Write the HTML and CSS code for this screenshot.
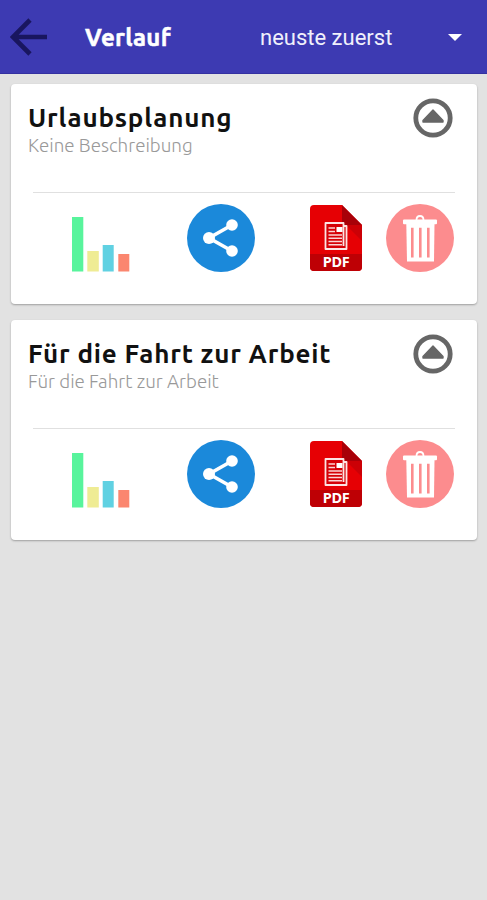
FILE: index.html
```html
<!DOCTYPE html>
<html lang="de">
<head>
  <meta charset="UTF-8">
  <meta name="viewport" content="width=device-width, initial-scale=1.0">
  <title>Verlauf</title>
  <link rel="stylesheet" href="styles.css">
</head>
<body>

<!-- Icons, die in jeder Karte vorkommen -->
<svg class="icon-defs" aria-hidden="true">
  <symbol id="icon-toggle" viewBox="0 0 40 40">
    <circle cx="20" cy="20" r="17.2" fill="none" stroke="#666" stroke-width="4.8"/>
    <path d="M20 12 L30 22.5 V24 H10 V22.5 Z" fill="#666" stroke="#666" stroke-width="1.4" stroke-linejoin="round"/>
  </symbol>
  <symbol id="icon-chart" viewBox="0 0 58 55">
    <rect x="0" y="0" width="11.3" height="54.5" fill="#58f49c"/>
    <rect x="15.3" y="34" width="11.5" height="20.5" fill="#efec94"/>
    <rect x="30.7" y="28" width="11" height="26.5" fill="#60d1e2"/>
    <rect x="46.3" y="37" width="11" height="17.5" fill="#fb866f"/>
  </symbol>
  <symbol id="icon-share" viewBox="0 0 68 68">
    <circle cx="34" cy="34" r="34" fill="#1b89da"/>
    <path d="M45 21 L22 34 L45 47" fill="none" stroke="#fff" stroke-width="3.6"/>
    <circle cx="45" cy="21" r="5.8" fill="#fff"/>
    <circle cx="22" cy="34" r="6" fill="#fff"/>
    <circle cx="45" cy="47" r="5.8" fill="#fff"/>
  </symbol>
  <symbol id="icon-pdf" viewBox="0 0 53 66">
    <path d="M4 0 H32 L52 20 V62 Q52 66 48 66 H4 Q0 66 0 62 V4 Q0 0 4 0 Z" fill="#e60004"/>
    <path d="M33 17 L52 36 V20 H36 Z" fill="#cc0006"/>
    <path d="M32 0 L52 20 H36 Q32 20 32 16 Z" fill="#a80008"/>
    <path d="M0 49 H52 V62 Q52 66 48 66 H4 Q0 66 0 62 Z" fill="#be0005"/>
    <path d="M33.5 41 V18 H15.5 V44 H36.5 V21 H34" fill="#d60006" stroke="#fce4e4" stroke-width="1.8" stroke-linejoin="round"/>
    <path d="M18.5 23 H25 M18.5 26.5 H25 M18.5 30 H32 M18.5 33.2 H32 M18.5 36.500 H32 M18.5 39.700 H32" stroke="#fbd4d4" stroke-width="1.400"/>
    <rect x="26.500" y="22" width="6" height="5" fill="#fff"/>
    <text class="pdf-text" x="12.700" y="61.500" textLength="27" fill="#fff">PDF</text>
  </symbol>
  <symbol id="icon-trash" viewBox="0 0 68 68">
    <circle cx="34" cy="34" r="34" fill="#fc8c8e"/>
    <path d="M30.500 16 Q30.500 12 34 12 Q37.500 12 37.500 16" fill="none" stroke="#fff" stroke-width="1.8"/>
    <rect x="17" y="15.500" width="34" height="4.800" rx="1" fill="#fff"/>
    <path d="M20.300 20 H48.500 L48 57.500 H21 Z" fill="#fff"/>
    <path d="M26.300 23.800 V53.500 M34.300 23.800 V53.500 M42.300 23.800 V53.500" stroke="#fc8c8e" stroke-width="2.600"/>
  </symbol>
</svg>

<header class="toolbar">
  <svg class="back" viewBox="0 0 38 38">
    <path d="M37 19 H3 M20 2 L3 19 L20 36" fill="none" stroke="#19165f" stroke-width="4.600"/>
  </svg>
  <h1 class="toolbar-title">Verlauf</h1>
  <div class="sort">
    <span class="sort-label">neuste zuerst</span>
    <span class="sort-arrow"></span>
  </div>
</header>

<main class="list">
  <article class="card">
    <div class="card-head">
      <div>
        <h2 class="card-title">Urlaubsplanung</h2>
        <p class="card-text">Keine Beschreibung</p>
      </div>
      <svg class="toggle"><use href="#icon-toggle"/></svg>
    </div>
    <div class="actions">
      <svg class="chart"><use href="#icon-chart"/></svg>
      <svg class="share"><use href="#icon-share"/></svg>
      <svg class="pdf"><use href="#icon-pdf"/></svg>
      <svg class="trash"><use href="#icon-trash"/></svg>
    </div>
  </article>

  <article class="card">
    <div class="card-head">
      <div>
        <h2 class="card-title">Für die Fahrt zur Arbeit</h2>
        <p class="card-text">Für die Fahrt zur Arbeit</p>
      </div>
      <svg class="toggle"><use href="#icon-toggle"/></svg>
    </div>
    <div class="actions">
      <svg class="chart"><use href="#icon-chart"/></svg>
      <svg class="share"><use href="#icon-share"/></svg>
      <svg class="pdf"><use href="#icon-pdf"/></svg>
      <svg class="trash"><use href="#icon-trash"/></svg>
    </div>
  </article>
</main>

</body>
</html>
```
FILE: styles.css
```css
body {
  margin: 0;
  min-height: 900px;
  background-color: #e2e2e2;
  font-family: Ubuntu, "Noto Sans", sans-serif;
}
h1,
h2,
p {
  margin: 0;
}
.icon-defs {
  display: none;
}
.toolbar {
  display: flex;
  align-items: center;
  box-sizing: border-box;
  height: 74px;
  padding: 0 25px 0 10px;
  background-color: #3d3ab2;
  border-bottom: 1px solid #3430a0;
  color: white;
}
.back {
  width: 38px;
  height: 38px;
}
.toolbar-title {
  width: 175px;
  margin-left: 37px;
  padding-top: 2px;
  font-size: 24px;
  font-weight: 700;
  line-height: 32px;
  letter-spacing: 0.3px;
  -webkit-text-stroke: 0.5px white;
}
.sort {
  flex: 1;
  display: flex;
  align-items: center;
  justify-content: space-between;
  padding-top: 1px;
  font-family: Roboto, sans-serif;
  font-size: 22px;
}
.sort-label {
  color: #f0f0fb;
}
.sort-arrow {
  border-left: 7px solid transparent;
  border-right: 7px solid transparent;
  border-top: 7px solid white;
}
.list {
  display: flex;
  flex-direction: column;
  gap: 16px;
  padding: 10px 10px 0 11px;
}
.card {
  box-sizing: border-box;
  height: 220px;
  padding: 13px 22px 0;
  background-color: white;
  border-radius: 4px;
  box-shadow: 0 1px 2px rgba(0, 0, 0, 0.3);
}
.card-head {
  display: flex;
  justify-content: space-between;
  height: 95px;
  margin-left: -5px;
}
.card-title {
  padding-top: 1px;
  color: #111;
  font-size: 26px;
  font-weight: 600;
  line-height: 40px;
  letter-spacing: 0.8px;
  white-space: nowrap;
}
.card-text {
  margin-top: -6px;
  color: #999;
  font-size: 18.8px;
  font-weight: 300;
  line-height: 26px;
}
.toggle {
  width: 40px;
  height: 40px;
  margin: 0.5px 2px 0 0;
}
.actions {
  display: flex;
  align-items: flex-start;
  padding: 11px 0 0 39px;
  border-top: 1px solid #e0e0e0;
}
.chart {
  width: 58px;
  height: 55px;
  margin-top: 13px;
}
.share {
  width: 68px;
  height: 68px;
  margin-left: 57px;
}
.pdf {
  width: 53px;
  height: 66px;
  margin: 1px 0 0 55px;
}
.pdf-text {
  font-family: "Noto Sans", sans-serif;
  font-size: 14.5px;
  font-weight: 700;
}
.trash {
  flex: none;
  width: 68px;
  height: 68px;
  margin-left: 23px;
}
```
